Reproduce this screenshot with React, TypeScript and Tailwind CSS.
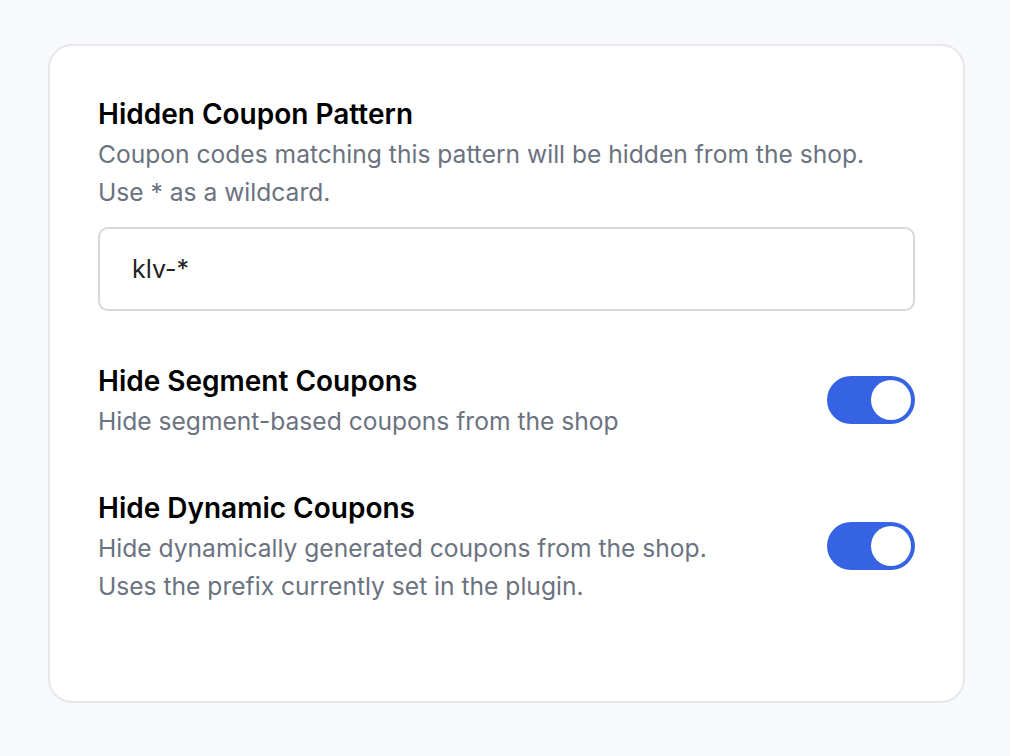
import { useState } from "react";

function Toggle({ on, onChange }: { on: boolean; onChange: () => void }) {
  return (
    <button
      type="button"
      onClick={onChange}
      className={`-mt-[4px] flex h-[48px] w-[88px] shrink-0 items-center rounded-full p-[4px] transition-colors ${
        on ? "justify-end bg-[#3563e3]" : "justify-start bg-[#d1d5db]"
      }`}
    >
      <span className="block h-[40px] w-[40px] rounded-full bg-white" />
    </button>
  );
}

export default function App() {
  const [pattern, setPattern] = useState("klv-*");
  const [hideSegment, setHideSegment] = useState(true);
  const [hideDynamic, setHideDynamic] = useState(true);

  return (
    <div
      className="min-h-[756px] w-full bg-[#f8f9fb] pl-[48px] pt-[44px]"
      style={{ fontFamily: "Inter, 'Noto Sans', sans-serif" }}
    >
      <div className="h-[659px] w-[917px] rounded-[24px] border-2 border-[#e6e7eb] bg-white px-[48px] pt-[50px]">
        {/* pattern */}
        <div>
          <h3 className="text-[28px] font-semibold leading-[36px] text-black">
            Hidden Coupon Pattern
          </h3>
          <p className="mt-[3px] text-[24.6px] leading-[38px] text-[#6b7280]">
            Coupon codes matching this pattern will be hidden from the shop.
            <br />
            Use * as a wildcard.
          </p>
          <input
            value={pattern}
            onChange={(e) => setPattern(e.target.value)}
            className="mt-[16px] h-[84px] w-full rounded-[10px] border-2 border-[#d6d8dc] px-[32px] text-[25px] text-[#222222] outline-none"
          />
        </div>

        {/* segment */}
        <div className="mt-[52px] flex items-center justify-between">
          <div>
            <h3 className="text-[28px] font-semibold leading-[36px] text-black">
              Hide Segment Coupons
            </h3>
            <p className="mt-[3px] text-[24.6px] leading-[38px] text-[#6b7280]">
              Hide segment-based coupons from the shop
            </p>
          </div>
          <Toggle on={hideSegment} onChange={() => setHideSegment(!hideSegment)} />
        </div>

        {/* dynamic */}
        <div className="mt-[50px] flex items-center justify-between">
          <div>
            <h3 className="text-[28px] font-semibold leading-[36px] text-black">
              Hide Dynamic Coupons
            </h3>
            <p className="mt-[3px] text-[24.6px] leading-[38px] text-[#6b7280]">
              Hide dynamically generated coupons from the shop.
              <br />
              Uses the prefix currently set in the plugin.
            </p>
          </div>
          <Toggle on={hideDynamic} onChange={() => setHideDynamic(!hideDynamic)} />
        </div>
      </div>
    </div>
  );
}
